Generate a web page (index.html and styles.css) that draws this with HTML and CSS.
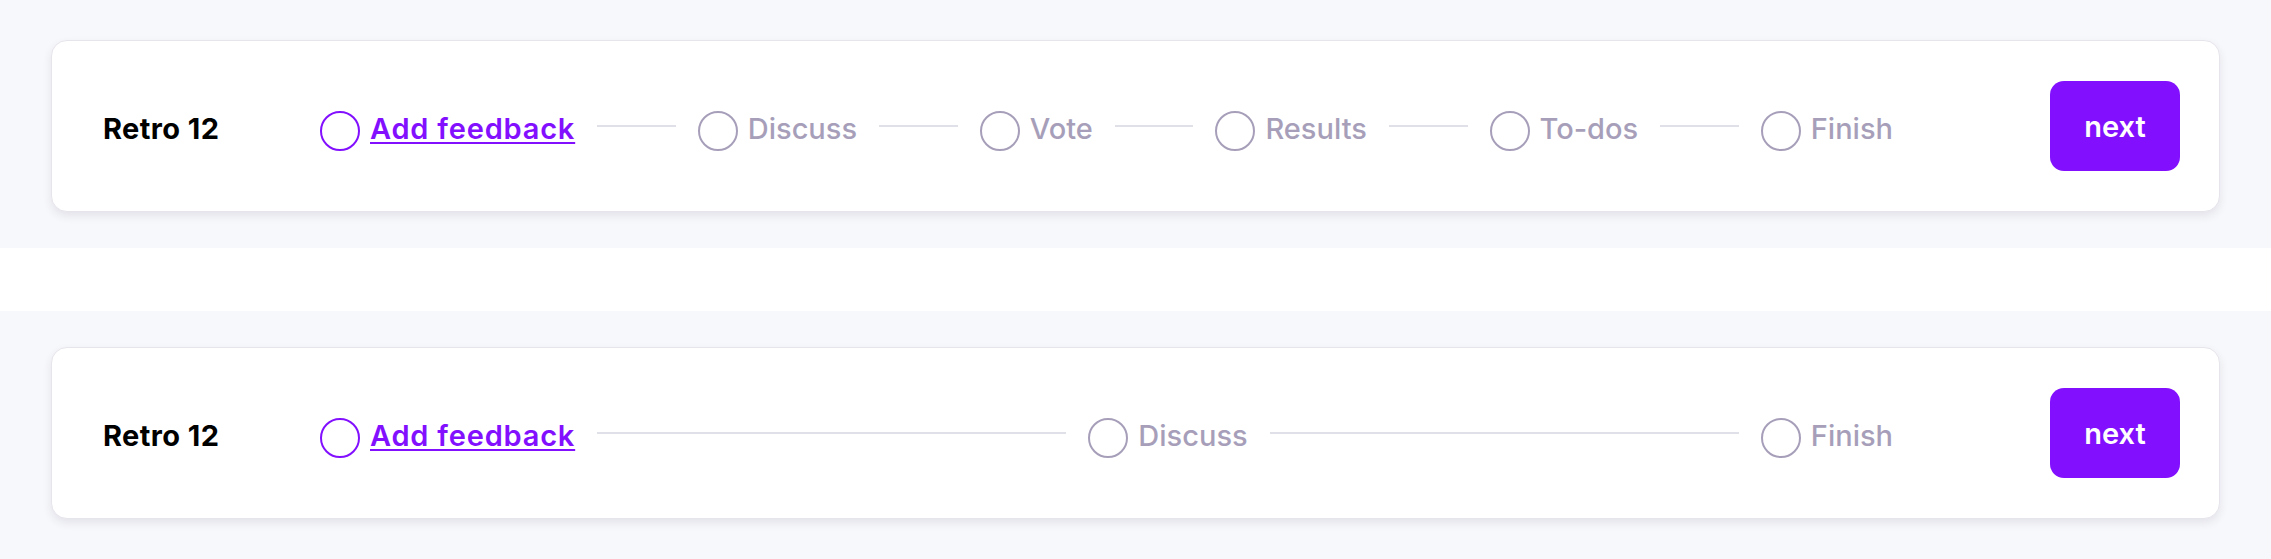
FILE: index.html
```html
<!DOCTYPE html>
<html lang="en">
<head>
<meta charset="utf-8">
<title>Retro steps</title>
<link rel="stylesheet" href="styles.css">
</head>
<body>
  <section class="band band-first">
    <div class="card">
      <div class="title">Retro 12</div>
      <div class="steps">
        <div class="step active"><span class="dot"></span><a class="label" href="#">Add feedback</a></div>
        <div class="connector"></div>
        <div class="step"><span class="dot"></span><span class="label">Discuss</span></div>
        <div class="connector"></div>
        <div class="step"><span class="dot"></span><span class="label">Vote</span></div>
        <div class="connector"></div>
        <div class="step"><span class="dot"></span><span class="label">Results</span></div>
        <div class="connector"></div>
        <div class="step"><span class="dot"></span><span class="label">To-dos</span></div>
        <div class="connector"></div>
        <div class="step"><span class="dot"></span><span class="label">Finish</span></div>
      </div>
      <button class="next" type="button">next</button>
    </div>
  </section>
  <section class="band band-second">
    <div class="card">
      <div class="title">Retro 12</div>
      <div class="steps">
        <div class="step active"><span class="dot"></span><a class="label" href="#">Add feedback</a></div>
        <div class="connector"></div>
        <div class="step"><span class="dot"></span><span class="label">Discuss</span></div>
        <div class="connector"></div>
        <div class="step"><span class="dot"></span><span class="label">Finish</span></div>
      </div>
      <button class="next" type="button">next</button>
    </div>
  </section>
</body>
</html>
```
FILE: styles.css
```css
* { box-sizing: border-box; }
html, body { margin: 0; padding: 0; }
body {
  background: #ffffff;
  font-family: Inter, "Open Sans", "Liberation Sans", sans-serif;
  width: 2271px;
  height: 559px;
  overflow: hidden;
}
.band {
  background: #f7f8fb;
  padding: 0 51px;
}
.band-first { padding-top: 40px; padding-bottom: 36px; }
.band-second { margin-top: 63px; padding-top: 36px; padding-bottom: 40px; }
.card {
  height: 172px;
  background: #ffffff;
  border: 1px solid #e7e5ec;
  border-radius: 16px;
  box-shadow: 0 4px 8px rgba(60, 50, 90, 0.10);
  display: flex;
  align-items: center;
  padding: 0 39px 0 51px;
}
.title {
  width: 217px;
  flex-shrink: 0;
  font-size: 29px;
  font-weight: 700;
  color: #000000;
  letter-spacing: 0.4px;
  margin-top: 4px;
}
.steps {
  flex: 1;
  display: flex;
  align-items: center;
  min-width: 0;
}
.step {
  flex: none;
  display: flex;
  align-items: center;
  gap: 10px;
}
.dot {
  width: 40px;
  height: 40px;
  border-radius: 50%;
  border: 2px solid #a79fba;
  margin-top: 10px;
  flex: none;
}
.label {
  font-size: 29px;
  font-weight: 500;
  color: #a79fba;
  line-height: 1.2;
  margin-top: 6px;
}
.step.active .dot {
  border-color: #8210ff;
  border-width: 2.5px;
}
.step.active .label {
  color: #8210ff;
  font-weight: 600;
  letter-spacing: 0.8px;
  text-decoration: underline;
  text-decoration-thickness: 2px;
  text-underline-offset: 3px;
}
.connector {
  flex: 1;
  height: 2px;
  background: #e0e1e8;
  margin: 0 22px;
}
.next {
  flex: none;
  margin-left: 157px;
  width: 130px;
  height: 90px;
  border: none;
  border-radius: 14px;
  background: #8210ff;
  color: #ffffff;
  font-family: inherit;
  font-size: 29px;
  font-weight: 600;
  padding: 0;
}
```
